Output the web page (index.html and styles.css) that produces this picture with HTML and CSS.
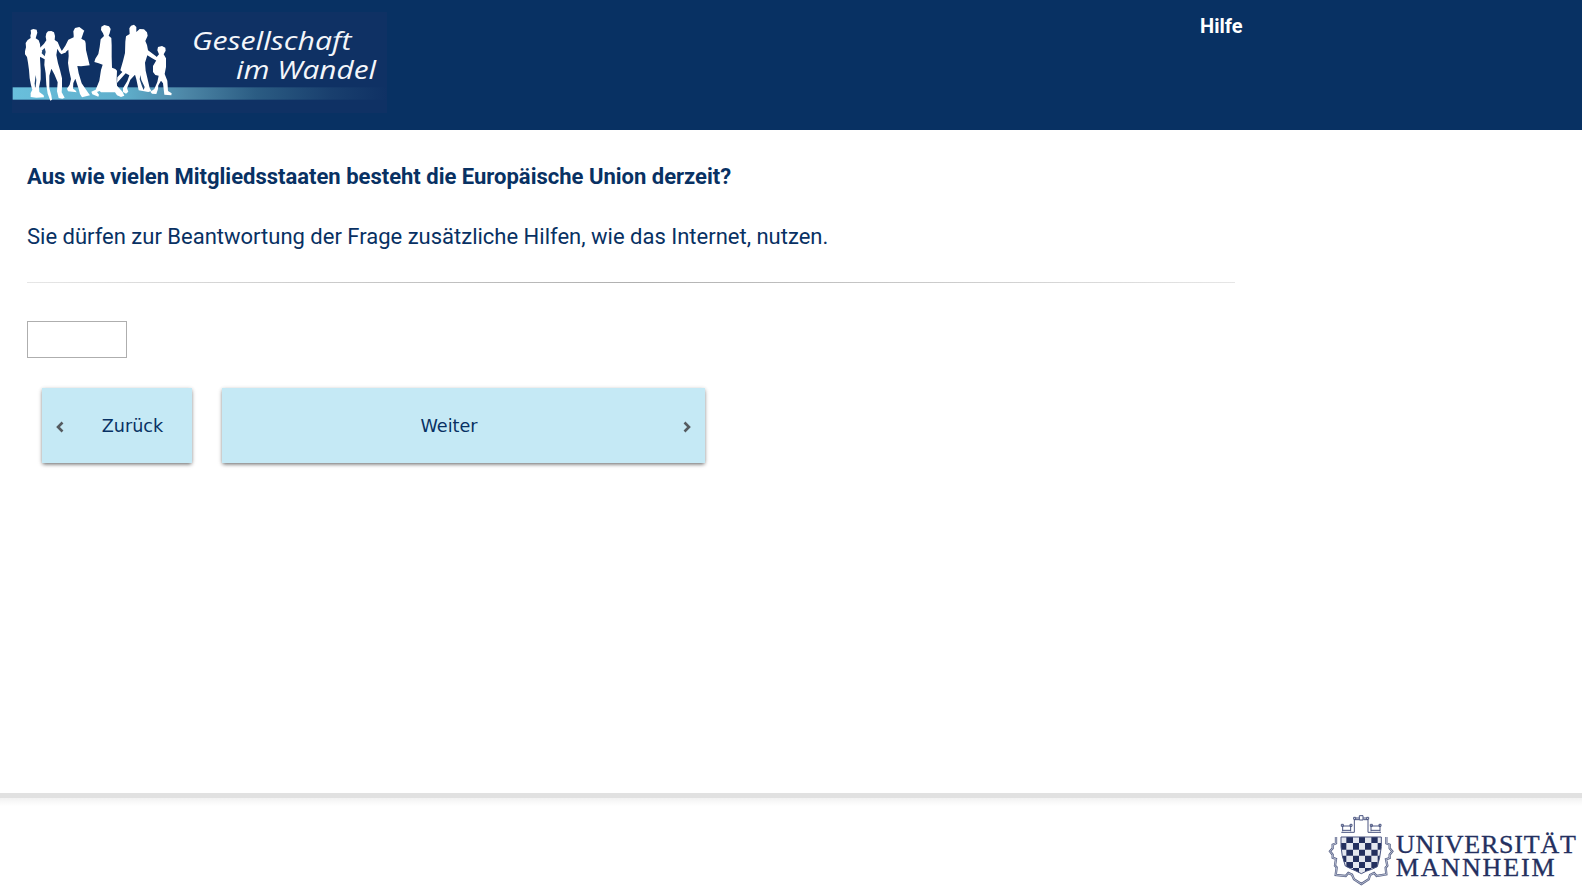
FILE: index.html
```
<!DOCTYPE html>
<html lang="de">
<head>
<meta charset="utf-8">
<title>Gesellschaft im Wandel</title>
<link rel="stylesheet" href="styles.css">
</head>
<body>
<header class="header">
  <svg class="logo" viewBox="36 36 1125 303" role="img" aria-label="Gesellschaft im Wandel">
    <defs>
      <linearGradient id="band" x1="0" x2="1" y1="0" y2="0">
        <stop offset="0" stop-color="#69bfdc"/>
        <stop offset=".3" stop-color="#5faecb"/>
        <stop offset=".46" stop-color="#4d87a7"/>
        <stop offset=".65" stop-color="#2b5c83"/>
        <stop offset=".85" stop-color="#193f6e"/>
        <stop offset="1" stop-color="#0f3164"/>
      </linearGradient>
    </defs>
    <rect x="36" y="36" width="1125" height="303" fill="#0f3164"/>
    <rect x="38" y="262" width="1123" height="37" fill="url(#band)"/>
    <g class="people" transform="translate(60 60)">
      <path d="M32 30 40 27 50 29 52 38 49 48 47 55 56 61 60 72 62 95 60 115 62 150 62 178 57 203 58 216 71 226 72 232 49 233 32 231 32 219 37 209 33 196 29 175 27 150 24 128 21 111 15 103 15 94 18 82 17 69 23 60 32 54 31 47 33 40Z"/>
      <path class="gap" d="M47 165 49 180 47 200 45 203 44 190Z"/>
      <path d="M79 40 84 34 94 33 102 37 105 48 104 60 113 66 119 80 125 92 139 89 138 97 124 103 118 97 112 86 109 105 114 130 120 150 126 175 126 200 125 217 134 233 127 236 116 234 111 214 113 187 103 163 94 146 88 167 88 205 94 226 96 239 91 242 83 221 79 195 77 160 73 135 74 118 60 110 57 99 60 83 72 71 79 61 77 50Z"/>
      <path class="gap" d="M74 84 77 96 74 109 65 100 67 91Z"/>
      <path d="M160 34 165 24 178 21 185 26 193 32 191 36 187 48 184 56 195 62 197 70 198 90 209 136 183 139 172 138 176 160 185 190 205 219 210 226 186 232 180 222 176 207 166 176 160 189 159 206 166 211 170 217 144 214 141 206 149 194 153 177 147 150 144 129 146 108 145 89 134 98 126 92 136 77 145 59 161 52 161 46Z"/>
    </g>
    <g class="people" transform="translate(270 60)">
      <path d="M33 30 34 20 43 15 57 19 62 27 59 40 56 47 64 54 65 75 65 110 66 143 76 147 81 152 80 177 81 197 98 216 103 227 93 231 81 226 75 217 33 217 29 213 21 216 27 224 25 230 7 223 4 215 17 209 28 182 33 150 38 134 26 130 13 126 16 116 25 102 29 81 32 58 42 48 39 40Z"/>
      <path d="M118 25 123 17 132 14 139 21 139 36 149 27 162 28 171 37 173 47 166 63 171 75 174 91 196 107 205 115 202 124 184 113 172 106 165 128 167 152 174 182 179 204 184 213 175 216 146 211 139 178 135 164 121 179 111 205 115 215 108 221 99 216 99 205 112 183 118 166 107 160 81 189 82 172 97 156 91 151 99 123 105 99 106 65 108 49 119 42Z"/>
      <path class="gap" d="M151 165 154 180 164 201 161 210 156 199 149 178Z"/>
      <path d="M202 91 204 81 216 78 226 83 227 92 221 103 228 115 228 141 224 162 232 182 234 213 245 220 244 226 223 224 219 190 213 182 205 196 204 207 199 222 186 221 181 215 193 207 202 186 206 167 196 165 189 156 189 138 200 119 200 111 207 103Z"/>
    </g>
    <g class="logo-text">
      <text x="576" y="151" textLength="478" lengthAdjust="spacingAndGlyphs">Gesellschaft</text>
      <text x="708" y="237" textLength="420" lengthAdjust="spacingAndGlyphs">im Wandel</text>
    </g>
  </svg>
  <nav class="nav"><a class="help">Hilfe</a></nav>
</header>
<main class="content">
  <h1 class="question">Aus wie vielen Mitgliedsstaaten besteht die Europäische Union derzeit?</h1>
  <p class="hint">Sie dürfen zur Beantwortung der Frage zusätzliche Hilfen, wie das Internet, nutzen.</p>
  <div class="divider"></div>
  <input class="answer" type="text" aria-label="Antwort">
  <div class="actions">
    <button class="btn back"><svg class="chevron" viewBox="0 0 8 12"><path d="M6.500 1.500 2 6l4.500 4.500"/></svg><span class="label">Zurück</span></button>
    <button class="btn next"><span class="label">Weiter</span><svg class="chevron" viewBox="0 0 8 12"><path d="M1.500 1.500 6 6l-4.500 4.500"/></svg></button>
  </div>
</main>
<footer class="footer">
  <svg class="uni" viewBox="24 96 753 222" role="img" aria-label="Universität Mannheim">
    <defs>
      <clipPath id="shield"><path d="M63 171H184V200Q180 235 172 260L155 268 140 273 124 281 108 273 92 266 76 258Q64 225 63 200z"/></clipPath>
    </defs>
    <g clip-path="url(#shield)">
      <rect x="60" y="168" width="128" height="115" fill="#e4e7ef"/>
      <path fill="#24305f" d="M79 171h20v18H79zM117 171h18v18h-18zM154 171h19v18h-19zM63 189h16v20H63zM99 189h18v20H99zM135 189h19v20h-19zM173 189h12v20h-12zM79 209h20v18H79zM117 209h18v18h-18zM154 209h19v18h-19zM63 227h16v19H63zM99 227h18v19H99zM135 227h19v19h-19zM173 227h12v19h-12zM79 246h20v18H79zM117 246h18v18h-18zM154 246h19v18h-19zM99 264h18v18H99zM135 264h19v18h-19z"/>
    </g>
    <g class="crest">
      <path d="M63 171H184V200Q180 235 172 260L155 268 140 273 124 281 108 273 92 266 76 258Q64 225 63 200z"/>
      <path d="M64 157H103V119H117M130 119H144V157H183M68 137V154M92 137V154M153 137V154M180 137V154M68 138H92M68 151H92M153 138H180M153 151H180"/>
      <path d="M64 133h6v6h-6zM90 133h6v6h-6zM151 133h6v6h-6zM177 133h6v6h-6zM101 112h6v6h-6zM140 112h6v6h-6zM118 107h11v13h-11zM107 114h11M129 114h11"/>
      <path class="frame" d="M48 171V190L38 194V205L30 214 38 224V233L48 237 45 257 50 262 47 285 77 288 85 279 96 284 102 298 124 312 146 298 150 285 162 279 170 288 199 283 197 263 202 257 198 238 209 234V224L217 214 209 205V194L199 190V171"/>
      <path class="frame-inner" d="M48 171V190L38 194V205L30 214 38 224V233L48 237 45 257 50 262 47 285 77 288 85 279 96 284 102 298 124 312 146 298 150 285 162 279 170 288 199 283 197 263 202 257 198 238 209 234V224L217 214 209 205V194L199 190V171"/>
    </g>
    <g class="uni-text">
      <text x="228" y="220" textLength="540">UNIVERSITÄT</text>
      <text x="227" y="288" textLength="477">MANNHEIM</text>
    </g>
  </svg>
</footer>
</body>
</html>
```
FILE: styles.css
```
* { box-sizing: border-box; }
html, body { margin: 0; height: 100%; }
body {
  display: flex;
  flex-direction: column;
  overflow: hidden;
  background: #fff;
  color: #083163;
  font-family: Roboto, sans-serif;
}
.header {
  display: flex;
  justify-content: space-between;
  align-items: flex-start;
  height: 130px;
  padding: 12px 339.5px 0 12px;
  background: #083163;
}
.logo { display: block; width: 375px; height: 101px; }
.people { fill: #fff; }
.people .gap { fill: #1d4474; }
.logo-text {
  fill: #f4f6fa;
  font-family: "Open Sans", sans-serif;
  font-size: 78px;
  font-style: italic;
}
.help {
  display: block;
  color: #fff;
  font-size: 20px;
  font-weight: 700;
  line-height: 28px;
}
.content { flex: 1; padding: 31px 27px 0; }
.question, .hint { margin: 0; font-size: 22px; line-height: 32px; }
.question { font-weight: 700; }
.hint { margin-top: 28px; font-weight: 400; }
.divider {
  width: 1208px;
  height: 1px;
  margin-top: 29px;
  background: linear-gradient(90deg, #e6e6e6, #b0b0b0 50%, #e6e6e6);
}
.answer {
  display: block;
  width: 100px;
  height: 37px;
  margin-top: 38px;
  border: 1px solid #aeaeae;
  border-radius: 0;
  background: #fff;
}
.actions { display: flex; gap: 30px; margin: 30px 0 0 15px; }
.btn {
  display: flex;
  align-items: center;
  height: 75px;
  padding: 0 14px;
  border: 0;
  border-radius: 0;
  background: #c5e9f5;
  box-shadow: 0 2px 4px -1px rgba(0, 0, 0, .5), 0 1px 4px rgba(0, 0, 0, .2);
  color: #083163;
  font: 17.6px "DejaVu Sans", sans-serif;
}
.back { width: 150px; }
.next { width: 483px; }
.label { flex: 1; text-align: center; }
.back .label { padding-left: 23px; }
.next .label { padding-right: 21px; }
.chevron { width: 8px; height: 12px; margin-top: 3px; fill: none; stroke: #555b60; stroke-width: 2.6; }
.footer {
  display: flex;
  justify-content: flex-end;
  align-items: flex-start;
  height: 97px;
  padding: 14px 3px 0 0;
  border-top: 5px solid #e1e1e1;
  background: linear-gradient(#f2f2f2, #fff 8px);
}
.uni { display: block; width: 251px; height: 74px; }
.crest { fill: none; stroke: #4a5580; stroke-width: 3; }
.frame { stroke: #5b6589; stroke-width: 7; }
.frame-inner { stroke: #dfe3ee; stroke-width: 2; }
.uni-text {
  fill: #24305f;
  stroke: #24305f;
  stroke-width: 1;
  font-family: "Liberation Serif", serif;
  font-size: 78px;
}
```
